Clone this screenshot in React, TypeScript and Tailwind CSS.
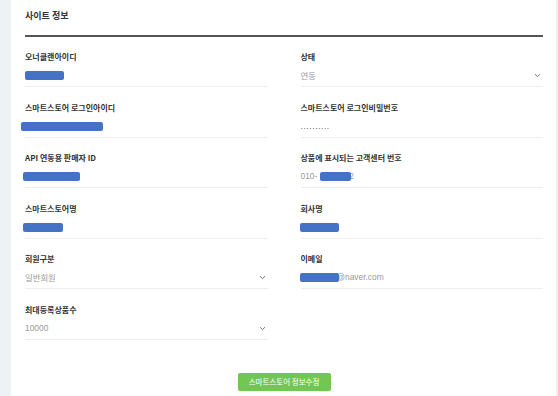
import React from "react";

const Chevron = () => (
  <svg width="7" height="5" viewBox="0 0 7 5" className="shrink-0">
    <path d="M1 1.2 L3.5 3.6 L6 1.2" fill="none" stroke="#666" strokeWidth="0.9" />
  </svg>
);

const Bar = ({ w, cls = "" }: { w: number; cls?: string }) => (
  <span className={"inline-block h-[9px] rounded-[2px] bg-[#4472c4] " + cls} style={{ width: w }} />
);

function Field({ label, children, select }: { label: string; children?: React.ReactNode; select?: boolean }) {
  return (
    <div className="flex flex-col">
      <div className="text-[8px] leading-[12px] font-bold text-[#333]">{label}</div>
      <div className="mt-[2px] flex h-[22px] items-center justify-between border-b border-[#eeeeee] pr-[2px] text-[8.4px] text-[#999]">
        <div className="flex items-center">{children}</div>
        {select && <Chevron />}
      </div>
    </div>
  );
}

const lat = { fontFamily: '"Liberation Sans", sans-serif' };

export default function App() {
  return (
    <div
      className="flex h-[396px] w-[558px] overflow-hidden bg-[#eef1f6]"
      style={{ fontFamily: '"Noto Sans CJK KR", "Liberation Sans", sans-serif' }}
    >
      <div className="w-[11px] shrink-0" />
      <div className="flex w-[545px] shrink-0 flex-col bg-white pl-[14px] pr-[13px]">
        <div className="mt-[9px] text-[9px] font-bold leading-[14px] text-[#333]">사이트 정보</div>
        <div className="mt-[12px] h-[2px] bg-[#555]" />
        <div className="mt-[14px] grid grid-cols-2 gap-x-[33px] gap-y-[14.5px]">
          <Field label="오너클랜아이디">
            <Bar w={39} />
          </Field>
          <Field label="상태" select>
            <span>연동</span>
          </Field>
          <Field label="스마트스토어 로그인아이디">
            <Bar w={82} cls="-ml-[4px]" />
          </Field>
          <Field label="스마트스토어 로그인비밀번호">
            <span className="tracking-[0.6px] text-[#666]" style={lat}>..........</span>
          </Field>
          <Field label="API 연동용 판매자 ID">
            <Bar w={57} cls="-ml-[2px]" />
          </Field>
          <Field label="상품에 표시되는 고객센터 번호">
            <span style={lat}>010-</span>
            <Bar w={31} cls="ml-[3px] relative z-10" />
            <span className="-ml-[2px]" style={lat}>2</span>
          </Field>
          <Field label="스마트스토어명">
            <Bar w={40} cls="-ml-[2px]" />
          </Field>
          <Field label="회사명">
            <Bar w={39} cls="-ml-[1px]" />
          </Field>
          <Field label="회원구분" select>
            <span>일반회원</span>
          </Field>
          <Field label="이메일">
            <Bar w={39} cls="-ml-[1px] relative z-10" />
            <span className="-ml-[2px]" style={lat}>@naver.com</span>
          </Field>
          <Field label="최대등록상품수" select>
            <span style={lat}>10000</span>
          </Field>
          <div />
        </div>
        <div className="mt-[33px] flex justify-center">
          <button className="flex h-[18px] w-[93px] items-center justify-center rounded-[2px] bg-[#72c752] text-[7.5px] text-white">
            스마트스토어 정보수정
          </button>
        </div>
      </div>
      <div className="flex-1" />
    </div>
  );
}
